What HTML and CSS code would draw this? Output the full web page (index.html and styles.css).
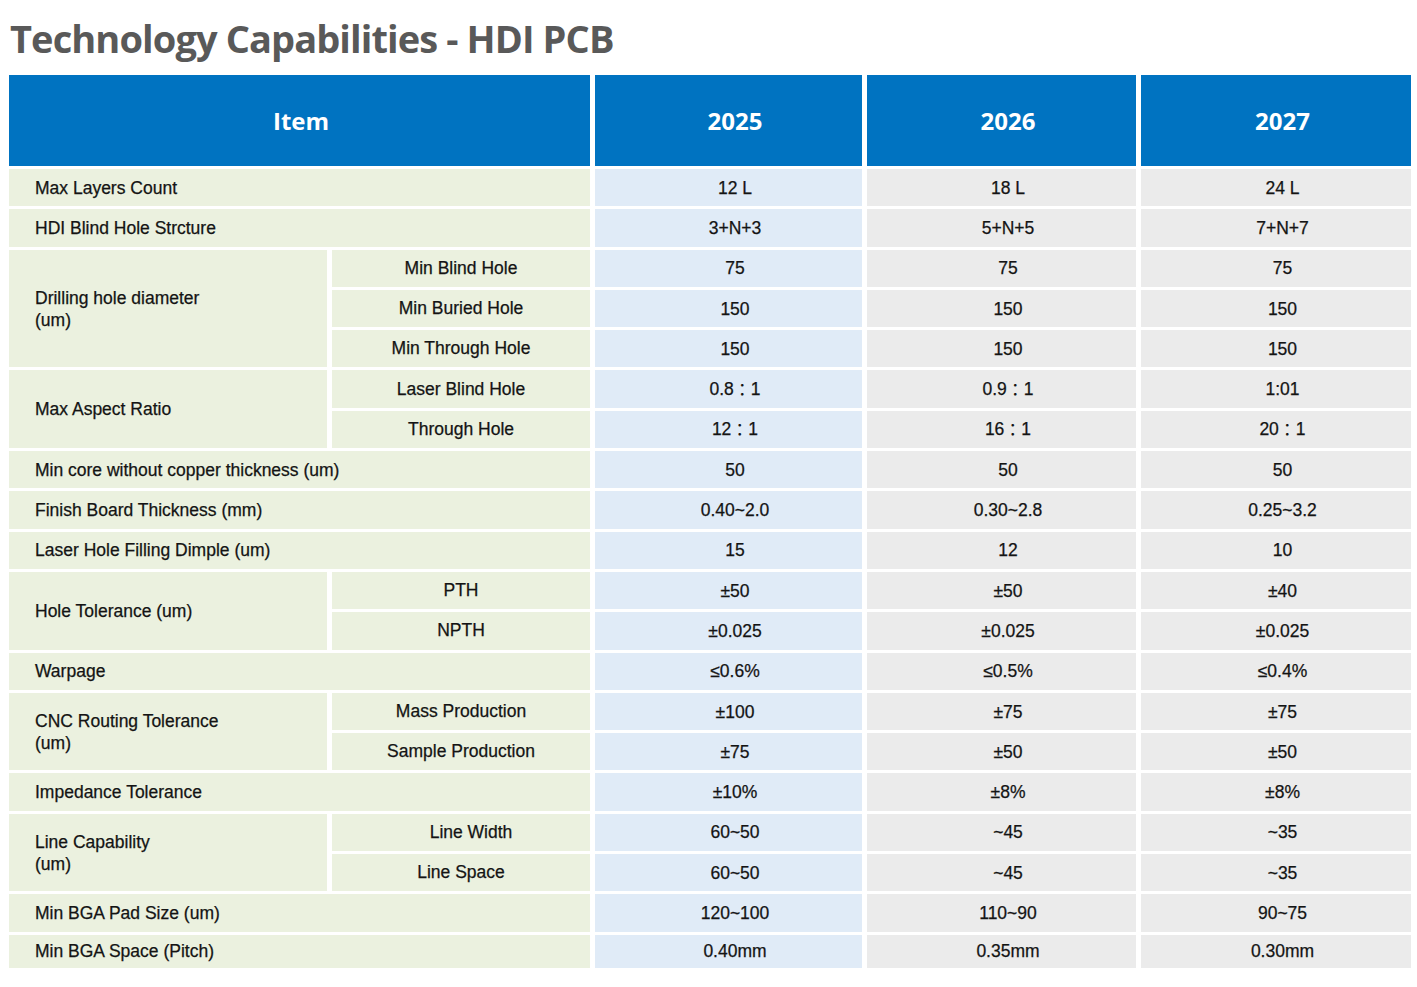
FILE: index.html
```html
<!DOCTYPE html>
<html>
<head>
<meta charset="utf-8">
<link rel="stylesheet" href="styles.css">
</head>
<body>
<h1 class="title">Technology Capabilities - HDI PCB</h1>
<div class="grid">
  <div class="hd item">Item</div>
  <div class="hd yr">2025</div>
  <div class="hd yr">2026</div>
  <div class="hd yr">2027</div>

  <div class="lbl wide">Max Layers Count</div>
  <div class="v a">12 L</div><div class="v b">18 L</div><div class="v b">24 L</div>

  <div class="lbl wide">HDI Blind Hole Strcture</div>
  <div class="v a">3+N+3</div><div class="v b">5+N+5</div><div class="v b">7+N+7</div>

  <div class="lbl r3">Drilling hole diameter<br>(um)</div>
  <div class="sub">Min Blind Hole</div>
  <div class="v a">75</div><div class="v b">75</div><div class="v b">75</div>
  <div class="sub">Min Buried Hole</div>
  <div class="v a">150</div><div class="v b">150</div><div class="v b">150</div>
  <div class="sub">Min Through Hole</div>
  <div class="v a">150</div><div class="v b">150</div><div class="v b">150</div>

  <div class="lbl r2">Max Aspect Ratio</div>
  <div class="sub">Laser Blind Hole</div>
  <div class="v a">0.8<span class="colon">：</span>1</div><div class="v b">0.9<span class="colon">：</span>1</div><div class="v b">1:01</div>
  <div class="sub">Through Hole</div>
  <div class="v a">12<span class="colon">：</span>1</div><div class="v b">16<span class="colon">：</span>1</div><div class="v b">20<span class="colon">：</span>1</div>

  <div class="lbl wide">Min core without copper thickness (um)</div>
  <div class="v a">50</div><div class="v b">50</div><div class="v b">50</div>

  <div class="lbl wide">Finish Board Thickness (mm)</div>
  <div class="v a">0.40~2.0</div><div class="v b">0.30~2.8</div><div class="v b">0.25~3.2</div>

  <div class="lbl wide">Laser Hole Filling Dimple (um)</div>
  <div class="v a">15</div><div class="v b">12</div><div class="v b">10</div>

  <div class="lbl r2">Hole Tolerance (um)</div>
  <div class="sub">PTH</div>
  <div class="v a">±50</div><div class="v b">±50</div><div class="v b">±40</div>
  <div class="sub">NPTH</div>
  <div class="v a">±0.025</div><div class="v b">±0.025</div><div class="v b">±0.025</div>

  <div class="lbl wide">Warpage</div>
  <div class="v a">≤0.6%</div><div class="v b">≤0.5%</div><div class="v b">≤0.4%</div>

  <div class="lbl r2">CNC Routing Tolerance<br>(um)</div>
  <div class="sub">Mass Production</div>
  <div class="v a">±100</div><div class="v b">±75</div><div class="v b">±75</div>
  <div class="sub">Sample Production</div>
  <div class="v a">±75</div><div class="v b">±50</div><div class="v b">±50</div>

  <div class="lbl wide">Impedance Tolerance</div>
  <div class="v a">±10%</div><div class="v b">±8%</div><div class="v b">±8%</div>

  <div class="lbl r2">Line Capability<br>(um)</div>
  <div class="sub shift">Line Width</div>
  <div class="v a">60~50</div><div class="v b">~45</div><div class="v b">~35</div>
  <div class="sub">Line Space</div>
  <div class="v a">60~50</div><div class="v b">~45</div><div class="v b">~35</div>

  <div class="lbl wide">Min BGA Pad Size (um)</div>
  <div class="v a">120~100</div><div class="v b">110~90</div><div class="v b">90~75</div>

  <div class="lbl wide">Min BGA Space (Pitch)</div>
  <div class="v a">0.40mm</div><div class="v b">0.35mm</div><div class="v b">0.30mm</div>
</div>
</body>
</html>
```
FILE: styles.css
```css
html, body {
  margin: 0;
  padding: 0;
  background: #ffffff;
}
.title {
  margin: 0;
  height: 75px;
  box-sizing: border-box;
  padding: 14px 0 0 10px;
  font-family: "Open Sans", "Noto Sans", sans-serif;
  font-weight: 700;
  font-size: 38px;
  line-height: 48px;
  letter-spacing: -0.9px;
  color: #595959;
}
.grid {
  display: grid;
  margin-left: 9px;
  width: 1402px;
  grid-template-columns: 318px 258px 267px 269px 270px;
  grid-template-rows: 91px repeat(19, 37.3px) 33px;
  gap: 3px 5px;
  font-family: "Liberation Sans", Arial, "Noto Sans CJK SC", sans-serif;
  font-size: 17.5px;
  color: #141414;
  -webkit-text-stroke: 0.25px #141414;
}
.grid > div {
  display: flex;
  align-items: center;
}
.hd {
  background: #0073c1;
  color: #ffffff;
  -webkit-text-stroke: 0;
  font-family: "Open Sans", "Noto Sans", sans-serif;
  font-weight: 700;
  font-size: 24px;
  justify-content: center;
}
.yr {
  padding-left: 13px;
}
.item {
  grid-column: span 2;
  padding-left: 3px;
}
.lbl {
  background: #ebf1df;
  padding-left: 26px;
  line-height: 22px;
}
.wide {
  grid-column: span 2;
}
.r2 {
  grid-row: span 2;
}
.r3 {
  grid-row: span 3;
}
.sub {
  background: #ebf1df;
  justify-content: center;
}
.shift {
  padding-left: 20px;
}
.v {
  justify-content: center;
  padding-left: 13px;
  line-height: 20px;
}
.colon {
  font-family: "Noto Sans CJK TC", "Noto Sans CJK JP", sans-serif;
  font-size: 17px;
  line-height: 20px;
  -webkit-text-stroke: 0.1px #141414;
}
.a {
  background: #e0ebf7;
}
.b {
  background: #ebebeb;
}
```
